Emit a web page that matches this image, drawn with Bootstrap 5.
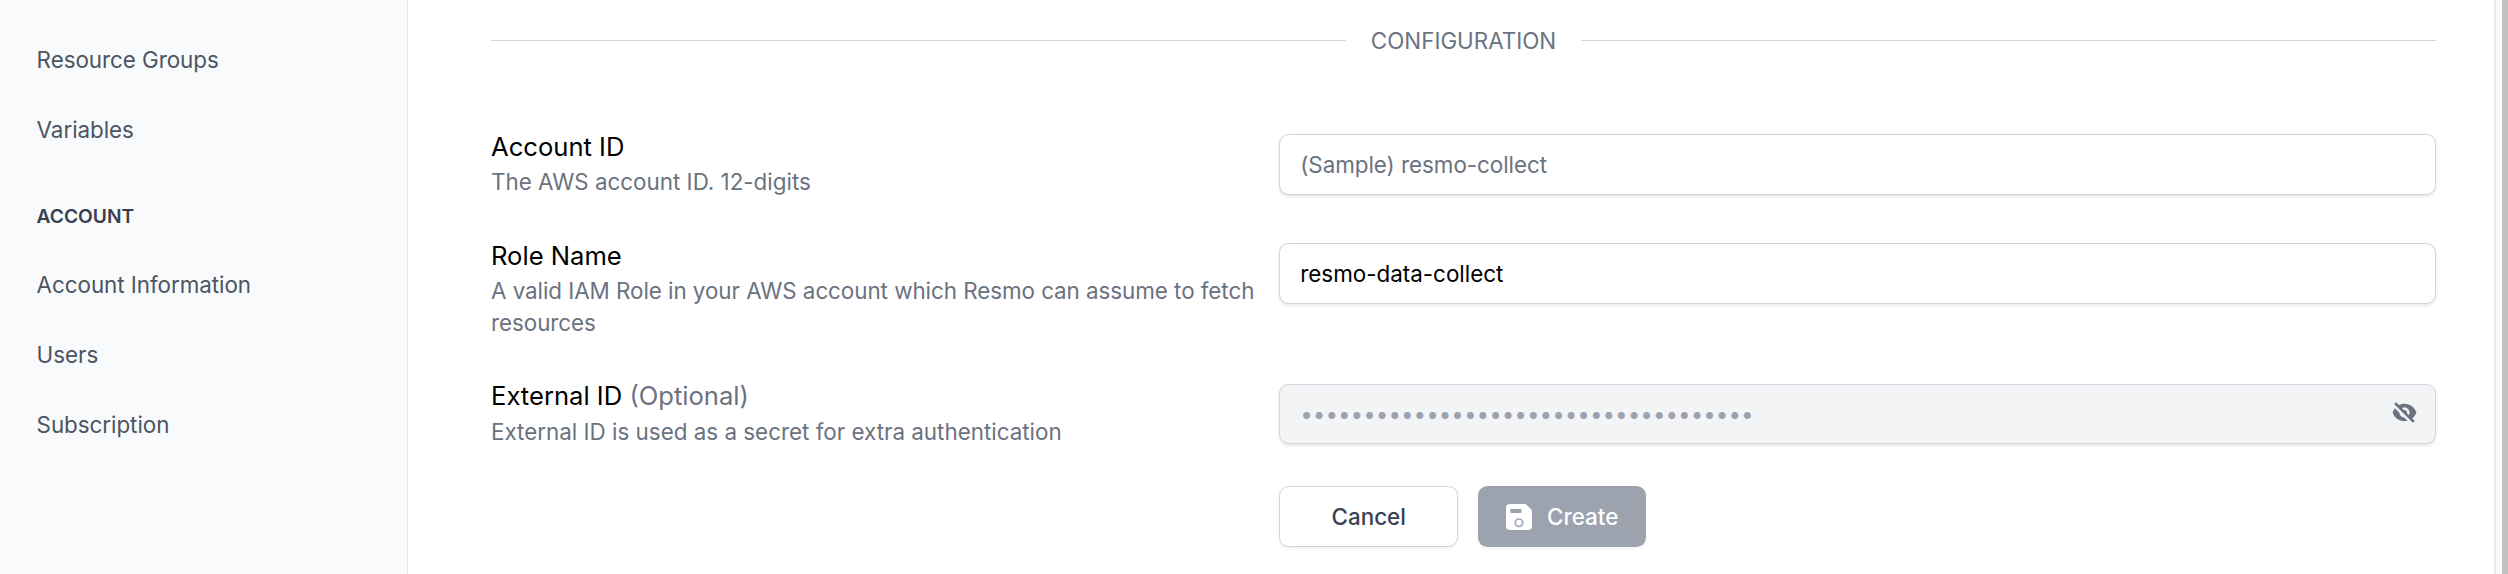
<!DOCTYPE html>
<html lang="en">
<head>
<meta charset="utf-8">
<meta name="viewport" content="width=device-width, initial-scale=1">
<title>Configuration</title>
<link href="https://cdn.jsdelivr.net/npm/bootstrap@5.3.0/dist/css/bootstrap.min.css" rel="stylesheet">
<style>
  body { font-family: Inter, "Liberation Sans", sans-serif; font-size: 22.4px; line-height: 32px; color: #000; background: #fff; }
  .side-menu { width: 408px; background: #f9fafb; border-right: 1px solid #e5e7eb; padding: 24.6px 36px 0 36.6px; }
  .side-menu .nav-link { color: #4b5563; padding: 19.1px 0; letter-spacing: -.04px; }
  .side-heading { font-size: 19.2px; font-weight: 600; line-height: 25.6px; color: #374151; margin: 39.4px 0 19.6px; }
  .main-pane { padding: 25px 58px 0 83px; }
  .section-rule { height: 1px; background: #d1d5db; margin-bottom: 1px; }
  .section-title { color: #6b7280; gap: 25px; margin-bottom: 70.9px; }
  .field-grid { display: grid; grid-template-columns: repeat(5, minmax(0, 1fr)); gap: 38.4px 25.6px; }
  .field-info { grid-column: span 2; }
  .field-entry { grid-column: 3 / span 3; }
  .field-info label { display: block; font-size: 25.6px; line-height: 38.4px; }
  .hint { color: #6b7280; }
  div.hint { margin-right: -8px; }
  .hint-long { letter-spacing: -.05px; }
  .field-entry .form-control { margin-top: 6.1px; height: 60.8px; font-size: 22.4px; line-height: 32px; padding: 12.8px 20px; color: #000; border: 1px solid #d1d5db; border-radius: 9.6px; box-shadow: 0 1.6px 3.2px rgba(0,0,0,.09); }
  .field-entry .form-control::placeholder { color: #6b7280; letter-spacing: -.04px; }
  .field-entry .form-control:disabled { background: #f3f4f6; color: #9ca3af; }
  .reveal-icon { position: absolute; right: 19.5px; top: 22.2px; width: 25px; height: 25px; color: #6b7280; }
  .action { height: 60.8px; font-size: 22.4px; line-height: 32px; font-weight: 500; border-radius: 9.6px; }
  .action-cancel { width: 179px; color: #374151; border: 1px solid #d1d5db; background: #fff; box-shadow: 0 1.6px 3.2px rgba(0,0,0,.05); }
  .action-create, .action-create:disabled { width: 168px; color: #fff; background: #9ca3af; border: 0; opacity: 1; box-shadow: 0 1.6px 3.2px rgba(0,0,0,.05); }
  .actions-row { gap: 20px; }
  .save-icon { margin-right: 15px; }
  .scroll-track { width: 14px; border-left: 2px solid #e8e8e8; border-right: 6px solid #c1c1c1; background: #fafafa; }
</style>
</head>
<body>
<div class="d-flex vh-100 overflow-hidden">
  <nav class="side-menu flex-shrink-0">
    <div class="nav flex-column">
      <a class="nav-link" href="#">Resource Groups</a>
      <a class="nav-link" href="#">Variables</a>
    </div>
    <h2 class="side-heading">ACCOUNT</h2>
    <div class="nav flex-column">
      <a class="nav-link" href="#">Account Information</a>
      <a class="nav-link" href="#">Users</a>
      <a class="nav-link" href="#">Subscription</a>
    </div>
  </nav>
  <main class="main-pane flex-grow-1">
    <div class="section-title d-flex align-items-center">
      <div class="section-rule flex-grow-1"></div>
      <span>CONFIGURATION</span>
      <div class="section-rule flex-grow-1"></div>
    </div>
    <form class="field-grid">
      <div class="field-info">
        <label for="account">Account ID</label>
        <div class="hint">The AWS account ID. 12-digits</div>
      </div>
      <div class="field-entry"><input id="account" class="form-control" type="text" placeholder="(Sample) resmo-collect"></div>

      <div class="field-info">
        <label for="role">Role Name</label>
        <div class="hint hint-long">A valid IAM Role in your AWS account which Resmo can assume to fetch resources</div>
      </div>
      <div class="field-entry"><input id="role" class="form-control" type="text" value="resmo-data-collect"></div>

      <div class="field-info">
        <label for="external">External ID <span class="hint">(Optional)</span></label>
        <div class="hint">External ID is used as a secret for extra authentication</div>
      </div>
      <div class="field-entry position-relative">
        <input id="external" class="form-control" type="password" value="000000000000000000000000000000000000" disabled>
        <svg class="reveal-icon" viewBox="0 0 20 20" fill="currentColor" aria-hidden="true">
          <path fill-rule="evenodd" d="M3.707 2.293a1 1 0 00-1.414 1.414l14 14a1 1 0 001.414-1.414l-1.473-1.473A10.014 10.014 0 0019.542 10C18.268 5.943 14.478 3 10 3a9.958 9.958 0 00-4.512 1.074l-1.78-1.781zm4.261 4.26l1.514 1.515a2.003 2.003 0 012.45 2.45l1.514 1.514a4 4 0 00-5.478-5.478z" clip-rule="evenodd"/>
          <path d="M12.454 16.697L9.75 13.992a4 4 0 01-3.742-3.741L2.335 6.578A9.98 9.98 0 00.458 10c1.274 4.057 5.065 7 9.542 7 .847 0 1.669-.105 2.454-.303z"/>
        </svg>
      </div>

      <div class="field-entry actions-row d-flex">
        <button type="button" class="btn action action-cancel p-0">Cancel</button>
        <button type="button" class="btn action action-create p-0 d-inline-flex align-items-center justify-content-center" disabled>
          <svg class="save-icon" width="26" height="26" viewBox="0 0 26 26" aria-hidden="true">
            <path fill="#fff" d="M4 0H17.5C19 0 20 .3 21 1.2L24.8 5C25.7 6 26 7 26 8.300V22a4 4 0 0 1-4 4H4a4 4 0 0 1-4-4V4a4 4 0 0 1 4-4Z"/>
            <rect x="4.300" y="5" width="11.200" height="4" rx=".8" fill="#9ca3af"/>
            <circle cx="13" cy="18.700" r="3.700" fill="none" stroke="#9ca3af" stroke-width="1.700"/>
          </svg>
          Create
        </button>
      </div>
    </form>
  </main>
  <div class="scroll-track flex-shrink-0"></div>
</div>
<script src="https://cdn.jsdelivr.net/npm/bootstrap@5.3.0/dist/js/bootstrap.bundle.min.js"></script>
</body>
</html>
